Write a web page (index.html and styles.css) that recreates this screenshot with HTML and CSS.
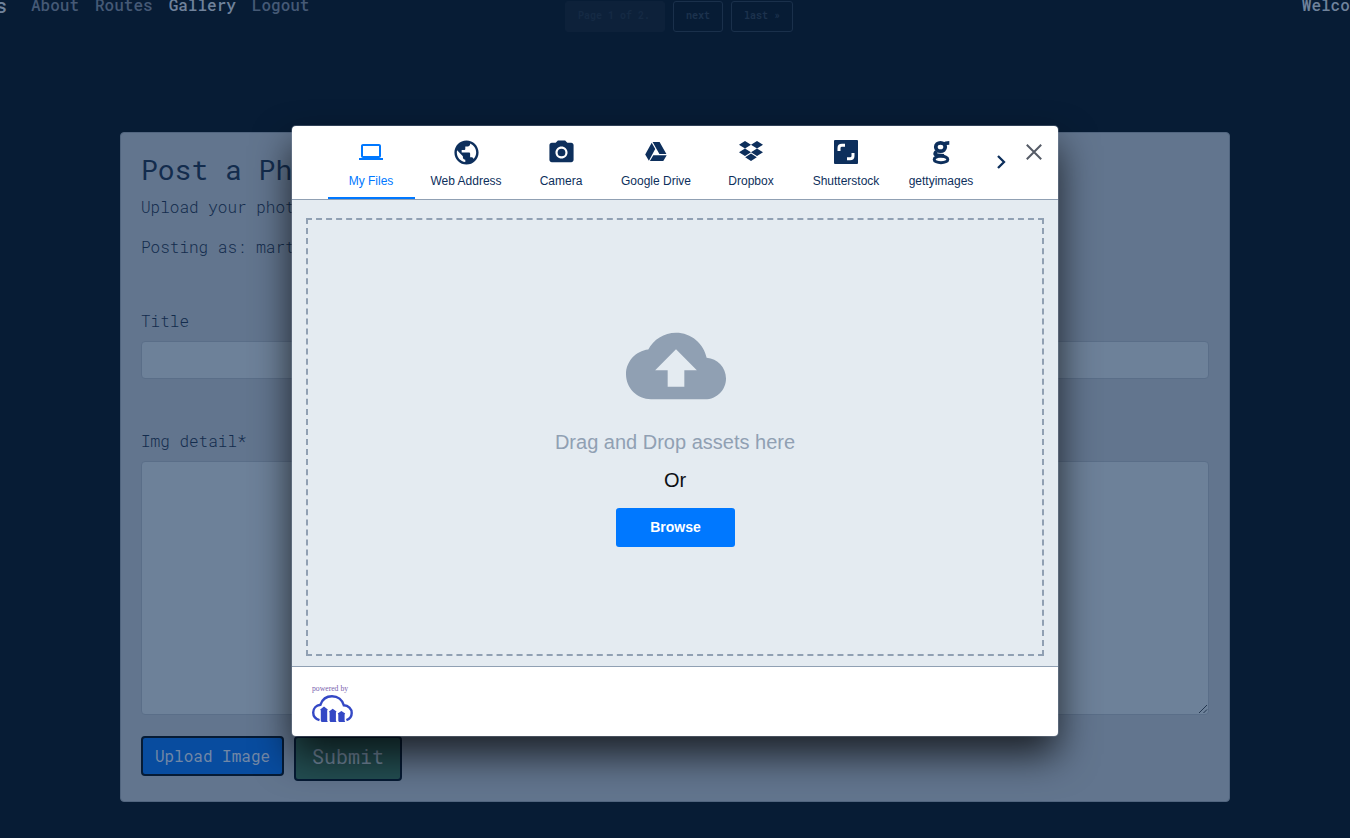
FILE: index.html
```html
<!DOCTYPE html>
<html lang="en">
<head>
<meta charset="utf-8">
<title>Gallery</title>
<link rel="stylesheet" href="styles.css">
</head>
<body>
<header class="topbar">
  <span class="brand">s</span>
  <nav class="nav">
    <a>About</a><a>Routes</a><a class="current">Gallery</a><a>Logout</a>
  </nav>
  <span class="welcome">Welcome</span>
</header>
<div class="pager">
  <span class="page-now">Page 1 of 2.</span>
  <span class="page-link">next</span>
  <span class="page-link">last »</span>
</div>
<main class="card">
  <h2>Post a Photo</h2>
  <p class="lead">Upload your photo</p>
  <p class="posting">Posting as: martin</p>
  <label class="title-label">Title</label>
  <div class="field"></div>
  <label class="detail-label">Img detail*</label>
  <div class="field area">
    <svg width="10" height="10" viewBox="0 0 10 10" fill="none" stroke="#23364f" stroke-width="1"><path d="M1 9 9 1M5.500 9 9 5.500"/></svg>
  </div>
  <div class="actions">
    <button class="upload">Upload Image</button>
    <button class="submit">Submit</button>
  </div>
</main>
<section class="modal">
  <div class="tabs-bar">
    <div class="tabs">
      <div class="tab active"><svg viewBox="0 0 24 24"><path d="M20 18c1.100 0 1.990-.9 1.990-2L22 6c0-1.100-.9-2-2-2H4c-1.100 0-2 .9-2 2v10c0 1.100.9 2 2 2H0v2h24v-2h-4zM4 6h16v10H4V6z"/></svg><span>My Files</span></div>
      <div class="tab"><svg class="large" viewBox="0 0 24 24"><path d="M12 2C6.480 2 2 6.480 2 12s4.480 10 10 10 10-4.480 10-10S17.520 2 12 2zm-1 17.930c-3.950-.49-7-3.850-7-7.930 0-.62.08-1.210.21-1.790L9 15v1c0 1.100.9 2 2 2v1.930zm6.900-2.540c-.26-.81-1-1.390-1.900-1.390h-1v-3c0-.55-.45-1-1-1H8v-2h2c.55 0 1-.45 1-1V7h2c1.100 0 2-.9 2-2v-.41c2.930 1.190 5 4.060 5 7.410 0 2.080-.8 3.970-2.100 5.390z"/></svg><span>Web Address</span></div>
      <div class="tab"><svg viewBox="0 0 24 24" class="camera"><circle cx="12" cy="12" r="3.200"/><path d="M9 2 7.170 4H4c-1.100 0-2 .9-2 2v12c0 1.100.9 2 2 2h16c1.100 0 2-.9 2-2V6c0-1.100-.9-2-2-2h-3.170L15 2H9zm3 15c-2.760 0-5-2.240-5-5s2.240-5 5-5 5 2.240 5 5-2.240 5-5 5z"/></svg><span>Camera</span></div>
      <div class="tab"><svg viewBox="0 0 24 24"><path d="M8.600 2h7l6.800 12.100h-7zM7.700 2.800 11.200 9 4.900 20.700 1.200 14.500zM9.300 15.200h13.400l-3.400 5.900H5.900z"/></svg><span>Google Drive</span></div>
      <div class="tab"><svg viewBox="0 0 24 24"><path d="M6 1 12 4.700 6 8.400 0 4.700zM18 1 24 4.700 18 8.400 12 4.700zM6 8.600 12 12.300 6 16 0 12.300zM18 8.600 24 12.300 18 16 12 12.300zM6.200 17.300 12 13.600 17.800 17.300 12 21z"/></svg><span>Dropbox</span></div>
      <div class="tab"><svg viewBox="0 0 24 24"><rect width="24" height="24" rx="1"/><path class="cut" d="M5 11V8Q5 5.300 8 5.300H11M19 13v3q0 2.700-3 2.700h-3"/></svg><span>Shutterstock</span></div>
      <div class="tab"><svg viewBox="0 0 24 24"><ellipse class="bowl" cx="11.500" cy="7" rx="4.700" ry="4.200"/><path class="link" d="M14.800 4.300Q16.500 2.900 20.300 2.900M7.500 11.500C5 14 6.500 15.200 9 15.400L15 15.800"/><ellipse class="loop" cx="12" cy="19.400" rx="6.800" ry="3.300"/></svg><span>gettyimages</span></div>
    </div>
    <svg class="next" viewBox="0 0 10 16"><path d="M2 2 8 8 2 14"/></svg>
    <svg class="close" viewBox="0 0 16 16"><path d="M.8.8 15.200 15.200M15.200.8.8 15.200"/></svg>
  </div>
  <div class="content">
    <div class="drop">
      <svg class="cloud" viewBox="0 0 24 24"><path d="M19.350 10.040C18.670 6.590 15.640 4 12 4 9.110 4 6.600 5.640 5.350 8.040 2.340 8.360 0 10.910 0 14c0 3.310 2.690 6 6 6h13c2.760 0 5-2.240 5-5 0-2.640-2.050-4.780-4.650-4.960zM14 13v4h-4v-4H7l5-5 5 5h-3z"/></svg>
      <div class="hint">Drag and Drop assets here</div>
      <div class="or">Or</div>
      <button class="browse">Browse</button>
    </div>
  </div>
  <footer class="foot">
    <span class="powered">powered by</span>
    <svg class="brand-cloud" viewBox="0 0 41 27"><path class="line" d="M7.500 25.200C3.500 24 1.200 21.200 1.200 17.600c0-4.200 3-7.300 7.200-7.800C10.200 4.600 14.600 1.300 20 1.300c5.800 0 10.300 3.600 11.800 9 4.500.2 7.900 3.300 7.900 7.600 0 3.500-2.100 6-5.300 7.200"/><path d="M8.200 14.500 12 11.500l3.800 3-.6 1v10.200l.6 1.300H9.600l-.8-1.300V15.500zM17 16.500l3.700-2.700 3.800 2.700-.6 1v8.200l.6 1.300h-6.200l-.7-1.300v-8.200zM25.700 18.500l3.700-2.600 3.800 2.600-.6 1v6.200l.6 1.300H27l-.7-1.300v-6.200z"/></svg>
  </footer>
</section>
</body>
</html>
```
FILE: styles.css
```css
* { box-sizing: border-box; }
body {
  margin: 0;
  height: 838px;
  overflow: hidden;
  position: relative;
  background: #071c35;
  color: #132c4d;
  font: 16px/24px "Roboto Mono", "DejaVu Sans Mono", monospace;
}
.topbar {
  display: flex;
  height: 0;
  margin-top: -7px;
  color: #455975;
  font-weight: 500;
}
.brand { width: 31px; margin-left: -5px; flex: none; color: #6f829b; font-size: 20px; }
.nav { display: flex; gap: 16px; margin-left: 5px; }
.nav .current { color: #6f829b; }
.welcome { margin-left: auto; margin-right: -19px; color: #6f829b; }
.pager {
  display: flex;
  gap: 8px;
  margin: 8px 0 0 565px;
  font-size: 10px;
  line-height: 28px;
  font-weight: 700;
}
.pager span { height: 31px; border: 1px solid #1a304b; border-radius: 3px; padding: 0 12px; white-space: pre; }
.pager .page-now { width: 100px; background: #0d213a; border-color: #0d213a; color: #152a44; }
.pager .page-link { width: 50px; color: #1c324d; }
.pager .page-link:last-child { width: 62px; }
.card {
  width: 1110px;
  height: 670px;
  margin: 100px 0 0 120px;
  padding: 20px;
  background: #62758e;
  border: 1px solid #51657f;
  border-radius: 4px;
  font-weight: 350;
}
h2 { margin: 0 0 8px; font-size: 28px; line-height: 34px; font-weight: 450; }
p { margin: 0 0 16px; }
.posting { margin-bottom: 50px; }
label { display: block; margin-bottom: 8px; }
.field { height: 38px; border: 1px solid #5a6e88; border-radius: 4px; background: #6d8199; }
.detail-label { margin-top: 50px; }
.area { height: 254px; display: flex; justify-content: flex-end; align-items: flex-end; }
.actions { display: flex; align-items: flex-start; gap: 10px; margin-top: 21px; }
.actions button {
  font-family: inherit;
  font-weight: 400;
  color: #758aa0;
  border: 2px solid #061b35;
  border-radius: 4px;
  padding: 0;
}
.actions .upload { width: 143px; height: 40px; padding-bottom: 1px; font-size: 16px; background: #084c9f; color: #7187a6; }
.actions .submit { width: 108px; height: 45px; padding-bottom: 5px; font-size: 20px; background: #234e52; }

.modal {
  position: absolute;
  left: 292px;
  top: 126px;
  width: 766px;
  height: 610px;
  display: flex;
  flex-direction: column;
  border-radius: 4px;
  background: #fff;
  box-shadow: 0 0 0 1px rgba(150,163,183,.3), 0 19px 38px rgba(0,0,0,.72);
  font-family: "Liberation Sans", Arial, sans-serif;
}
.tabs-bar { height: 74px; flex: none; display: flex; border-bottom: 1px solid #90a0b3; padding-left: 35.500px; }
.tabs { display: flex; gap: 8px; }
.tab {
  width: 87px;
  height: 73px;
  display: flex;
  flex-direction: column;
  align-items: center;
  padding-top: 14px;
  color: #0d2f5c;
  font-size: 12px;
  line-height: 16px;
  white-space: nowrap;
}
.tab span { margin-top: auto; margin-bottom: 10px; }
.tab svg { width: 24px; height: 24px; fill: #0d2f5c; overflow: visible; }
.tab .large, .tab .camera { width: 29px; height: 29px; margin: -2.500px 0; }
.tab .cut { fill: none; stroke: #fff; stroke-width: 3; }
.tab .bowl, .tab .link, .tab .loop { fill: none; stroke: #0d2f5c; stroke-width: 3.800; }
.tab .loop { stroke-width: 3; }
.tab.active { color: #0078ff; border-bottom: 2px solid #0078ff; }
.tab.active span { margin-bottom: 8px; }
.tab.active svg { fill: #0078ff; }
.next, .close { fill: none; flex: none; }
.next { width: 10px; height: 16px; margin: 28px 0 0 11px; stroke: #0d2f5c; stroke-width: 2.300; }
.close { width: 16px; height: 16px; margin: 18px 0 0 20px; stroke: #555b66; stroke-width: 2; }
.content { flex: 1; background: #e4ebf1; padding: 18px 14px 10px; }
.drop { height: 438px; border: 2px dashed #90a0b3; display: flex; flex-direction: column; align-items: center; font-size: 20px; }
.cloud { width: 100px; height: 100px; margin: 96px 0 0 1px; fill: #90a0b3; flex: none; }
.hint { color: #90a0b3; margin-top: 14px; }
.or { color: #0c0f14; margin-top: 14px; }
.browse {
  width: 119px;
  height: 39px;
  margin: 16px 0 0 1px;
  padding: 0 0 2px;
  border: 0;
  border-radius: 3px;
  background: #0078ff;
  color: #fff;
  font: 700 14px "Liberation Sans", Arial, sans-serif;
}
.foot { height: 70px; flex: none; border-top: 1px solid #90a0b3; padding: 17px 20px 0; display: flex; flex-direction: column; align-items: flex-start; border-radius: 0 0 4px 4px; }
.powered { font: 7.700px/9px "Liberation Serif", serif; color: #7a62ae; white-space: nowrap; }
.brand-cloud { width: 41px; height: 27px; flex: none; margin-top: 2px; fill: #3448c5; }
.brand-cloud .line { fill: none; stroke: #3448c5; stroke-width: 2.400; }
```
